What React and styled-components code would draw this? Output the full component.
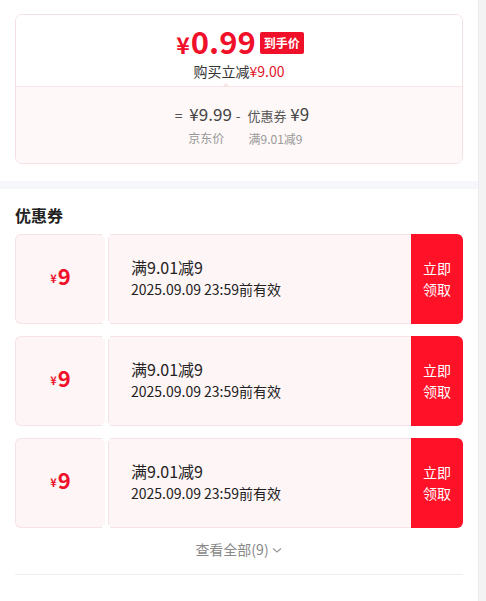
import React from 'react';
import styled, { createGlobalStyle } from 'styled-components';

const GlobalStyle = createGlobalStyle`
  * { box-sizing: border-box; }
  body {
    margin: 0;
    background: #fff;
    font-family: "Noto Sans CJK SC", "Noto Sans", sans-serif;
    color: #222;
  }
`;

const coupons = [1, 2, 3].map(id => ({
  id,
  amount: 9,
  rule: '满9.01减9',
  expire: '2025.09.09 23:59前有效',
}));

export default function App() {
  return (
    <Page>
      <GlobalStyle />
      <Main>
        <PriceSection>
          <PriceCard>
            <PriceTop>
              <PriceLine>
                <BigPrice>
                  <small>¥</small>0.99
                </BigPrice>
                <Badge>到手价</Badge>
              </PriceLine>
              <Reduce>
                购买立减<em>¥9.00</em>
              </Reduce>
            </PriceTop>
            <PriceBottom>
              <Formula>
                <Cell>
                  <Value>
                    <Op>=</Op> ¥9.99
                  </Value>
                  <Caption>京东价</Caption>
                </Cell>
                <Cell>
                  <Value>
                    <Op>-</Op> <Tag>优惠券</Tag> ¥9
                  </Value>
                  <Caption>满9.01减9</Caption>
                </Cell>
              </Formula>
            </PriceBottom>
          </PriceCard>
        </PriceSection>
        <Band />
        <CouponSection>
          <Title>优惠券</Title>
          <CouponList>
            {coupons.map(c => (
              <Coupon key={c.id}>
                <Amount>
                  <small>¥</small>
                  {c.amount}
                </Amount>
                <Info>
                  <Rule>{c.rule}</Rule>
                  <Expire>{c.expire}</Expire>
                </Info>
                <GetBtn>
                  立即
                  <br />
                  领取
                </GetBtn>
              </Coupon>
            ))}
          </CouponList>
          <More>
            查看全部(9)
            <svg width="12" height="12" viewBox="0 0 12 12">
              <path d="M2 4.5 L6 8 L10 4.5" fill="none" stroke="#999" strokeWidth="1.2" />
            </svg>
          </More>
          <Divider />
        </CouponSection>
      </Main>
      <Scroll />
    </Page>
  );
}

const Page = styled.div`
  display: flex;
  width: 486px;
  min-height: 601px;
`;

const Main = styled.div`
  width: 478px;
`;

const Scroll = styled.div`
  width: 8px;
  background: #f3f3f3;
  border-left: 1px solid #ececec;
`;

const PriceSection = styled.div`
  padding: 14px 15px 17px;
`;

const PriceCard = styled.div`
  border: 1px solid #f6dfe3;
  border-radius: 7px;
  overflow: hidden;
`;

const PriceTop = styled.div`
  position: relative;
  height: 72px;
  padding-top: 11px;
  display: flex;
  flex-direction: column;
  align-items: center;
  background: #fff;
  border-bottom: 1px solid #f8e6e8;
  &::after {
    content: '';
    position: absolute;
    left: 50%;
    bottom: -1px;
    margin-left: -17px;
    width: 0;
    height: 0;
    border-left: 4px solid transparent;
    border-right: 4px solid transparent;
    border-bottom: 4px solid #f6e3e5;
  }
`;

const PriceLine = styled.div`
  display: flex;
  align-items: center;
  gap: 4px;
  height: 32px;
  margin-left: 2px;
`;

const BigPrice = styled.span`
  display: block;
  color: #f0102a;
  font-size: 31px;
  font-weight: 700;
  line-height: 32px;
  small {
    font-size: 23px;
    margin-right: 1px;
  }
`;

const Badge = styled.span`
  display: block;
  background: #f0102a;
  color: #fff;
  font-size: 12px;
  font-weight: 700;
  line-height: 22px;
  padding: 0 4px;
  border-radius: 2px;
  margin-top: 2px;
`;

const Reduce = styled.div`
  font-size: 14px;
  line-height: 20px;
  color: #333;
  margin-top: 3px;
  em {
    font-style: normal;
    color: #e4142b;
  }
`;

const PriceBottom = styled.div`
  height: 76px;
  background: #fef8f8;
  display: flex;
  justify-content: center;
  padding-top: 15px;
`;

const Formula = styled.div`
  display: flex;
  gap: 4px;
  margin-left: 6px;
`;

const Cell = styled.div`
  display: flex;
  flex-direction: column;
  align-items: center;
`;

const Value = styled.div`
  font-size: 17px;
  line-height: 24px;
  color: #444;
`;

const Op = styled.span`
  font-size: 14px;
  color: #555;
  margin-right: 3px;
`;

const Tag = styled.span`
  font-size: 13px;
  color: #555;
`;

const Caption = styled.div`
  font-size: 12px;
  line-height: 20px;
  color: #999;
  margin-top: 1px;
  padding-left: 6px;
`;

const Band = styled.div`
  height: 8px;
  background: #f6f7fb;
`;

const CouponSection = styled.div`
  padding: 14px 15px 0;
`;

const Title = styled.h3`
  margin: 0;
  font-size: 16px;
  font-weight: 700;
  line-height: 24px;
  color: #222;
`;

const CouponList = styled.div`
  display: flex;
  flex-direction: column;
  gap: 12px;
  margin-top: 7px;
`;

const Coupon = styled.div`
  display: flex;
  height: 90px;
`;

const Part = styled.div`
  position: relative;
  background: #fef5f6;
  border: 1px solid #f6e3e6;
`;

const Amount = styled(Part)`
  width: 90px;
  border-radius: 6px 0 0 6px;
  border-right: none;
  display: flex;
  align-items: center;
  justify-content: center;
  color: #f0102a;
  font-size: 22px;
  font-weight: 700;
  padding-bottom: 8px;
  small {
    font-size: 11px;
    margin-right: 1px;
    margin-top: 5px;
  }
  &::before,
  &::after {
    content: '';
    position: absolute;
    right: -5px;
    width: 8px;
    height: 8px;
    border-radius: 50%;
    background: #fff;
    z-index: 1;
  }
  &::before {
    top: -5px;
  }
  &::after {
    bottom: -5px;
  }
`;

const Info = styled(Part)`
  flex: 1;
  margin-left: 3px;
  border-right: none;
  display: flex;
  flex-direction: column;
  justify-content: center;
  padding-left: 22px;
  padding-bottom: 2px;
`;

const Rule = styled.div`
  font-size: 16px;
  line-height: 22px;
  color: #222;
`;

const Expire = styled.div`
  font-size: 14px;
  line-height: 22px;
  color: #222;
`;

const GetBtn = styled.button`
  width: 52px;
  border: none;
  border-radius: 0 6px 6px 0;
  background: #ff1128;
  color: #fff;
  font-family: inherit;
  font-size: 14px;
  line-height: 21px;
  padding: 0;
  cursor: pointer;
`;

const More = styled.div`
  display: flex;
  justify-content: center;
  align-items: center;
  gap: 2px;
  height: 46px;
  padding-bottom: 4px;
  font-size: 14px;
  color: #888;
  svg {
    margin-top: 2px;
  }
`;

const Divider = styled.div`
  height: 1px;
  background: #efefef;
`;
